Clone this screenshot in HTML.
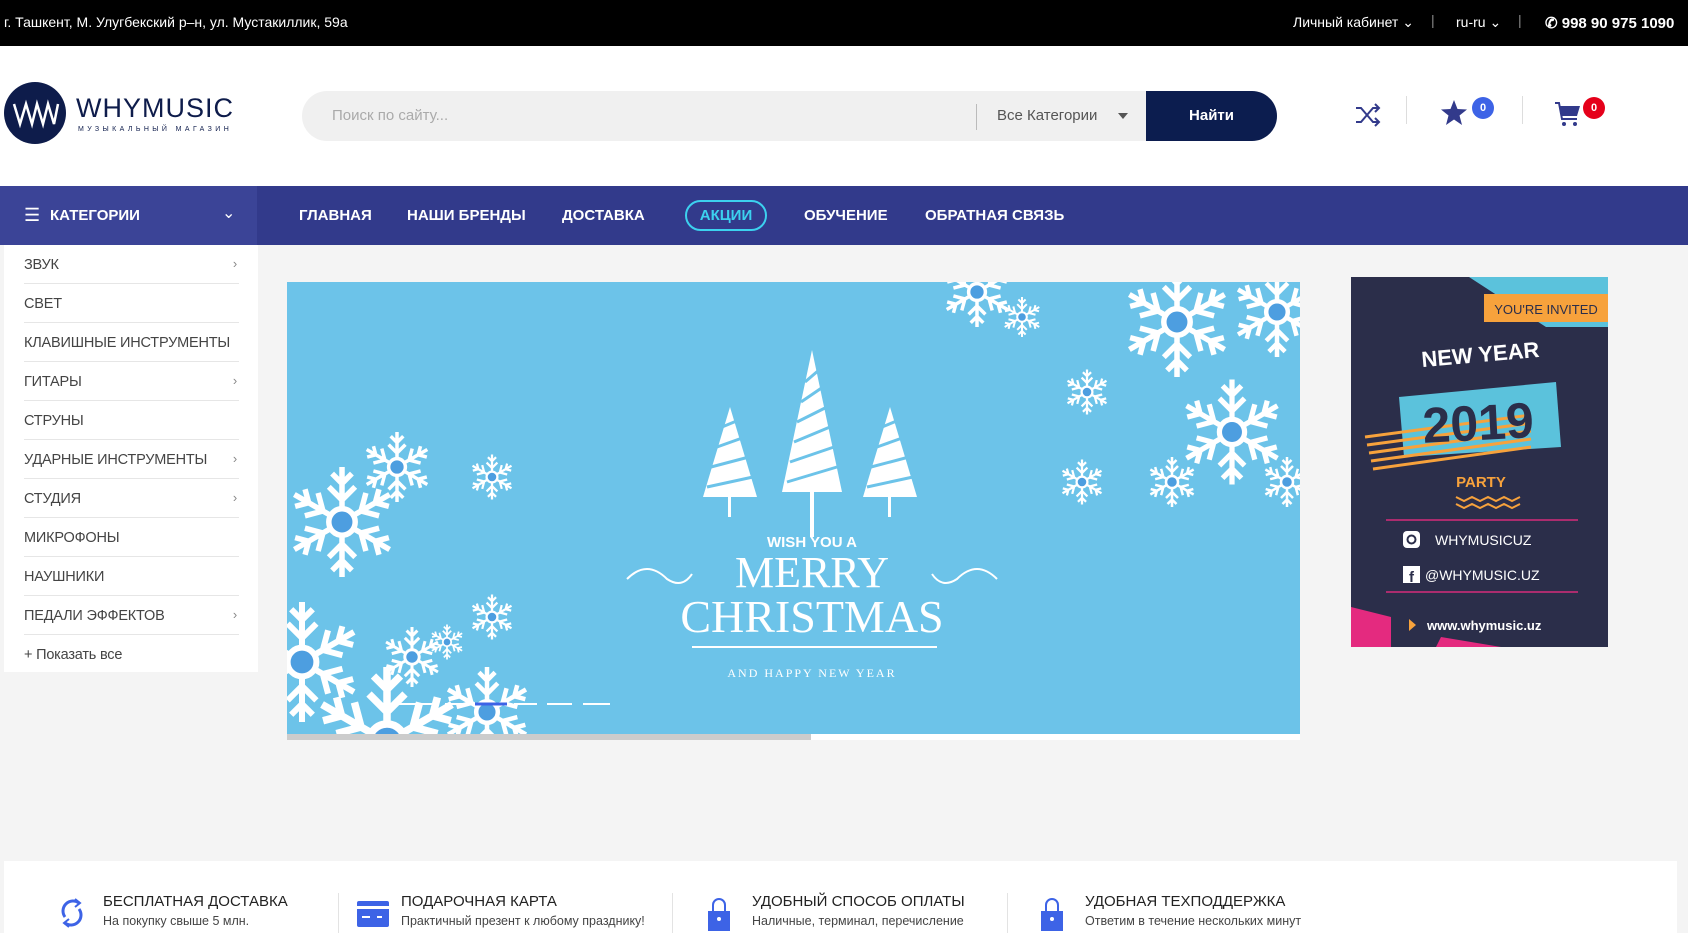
<!DOCTYPE html>
<html><head><meta charset="utf-8">
<style>
*{margin:0;padding:0;box-sizing:border-box}
body{width:1688px;height:933px;overflow:hidden;background:#f4f4f4;font-family:"Liberation Sans",sans-serif;position:relative}
.abs{position:absolute}
.top{left:0;top:0;width:1688px;height:46px;background:#000;color:#fff;font-size:14px}
.top span{position:absolute;top:14px}
.hdr{left:0;top:46px;width:1688px;height:140px;background:#fff}
.nav{left:0;top:186px;width:1688px;height:59px;background:#323a8b}
.nav .cat{position:absolute;left:0;top:0;width:257px;height:59px;background:#3b4497;color:#fff;font-weight:bold;font-size:16px}
.nav a{position:absolute;top:21px;color:#fff;font-weight:bold;font-size:15px;text-decoration:none;white-space:nowrap}
.side{left:4px;top:245px;width:254px;height:427px;background:#fff}
.side div{position:absolute;left:20px;width:215px;height:39px;border-bottom:1px solid #e6e6e6;font-size:14.5px;color:#444;padding-top:12px;white-space:nowrap;letter-spacing:-.2px}
.side div i{position:absolute;right:2px;top:11px;font-style:normal;color:#888;font-size:13px}
.feat{left:4px;top:861px;width:1673px;height:72px;background:#fff}
.f{position:absolute;top:32px}
.f b{display:block;font-weight:normal;font-size:15px;color:#222}
.f s{display:block;text-decoration:none;font-size:12.5px;color:#444;margin-top:4px}
.vs{position:absolute;top:32px;width:1px;height:40px;background:#e3e3e3}
</style></head><body>
<div class="abs top">
<span style="left:4px">г. Ташкент, М. Улугбекский р–н, ул. Мустакиллик, 59а</span>
<span style="left:1293px">Личный кабинет ⌄</span>
<span style="left:1431px;top:12px;color:#888">|</span>
<span style="left:1456px">ru-ru ⌄</span>
<span style="left:1518px;top:12px;color:#888">|</span>
<span style="left:1545px;font-weight:bold;font-size:15px">✆ 998 90 975 1090</span>
</div>
<div class="abs hdr">
<svg class="abs" style="left:4px;top:36px" width="62" height="62"><circle cx="31" cy="31" r="31" fill="#0e1c4b"/><path d="M10 22 L16 42 L22 22 L28 42 L33 22 L39 42 L44 22 L50 42 L54 22" stroke="#fff" stroke-width="2.5" fill="none"/></svg>
<div class="abs" style="left:76px;top:47px;font-size:27px;color:#0e1c4b;letter-spacing:1px">WHYMUSIC</div>
<div class="abs" style="left:78px;top:80px;font-size:7px;color:#0e1c4b;letter-spacing:3.4px">МУЗЫКАЛЬНЫЙ МАГАЗИН</div>
<div class="abs" style="left:302px;top:45px;width:975px;height:50px;background:#f0f0f0;border-radius:25px"></div>
<div class="abs" style="left:332px;top:61px;font-size:15px;color:#aaa">Поиск по сайту...</div>
<div class="abs" style="left:976px;top:58px;width:1px;height:26px;background:#bbb"></div>
<div class="abs" style="left:997px;top:61px;font-size:15px;color:#555">Все Категории</div>
<div class="abs" style="left:1118px;top:67px;width:0;height:0;border:5px solid transparent;border-top:6px solid #555"></div>
<div class="abs" style="left:1146px;top:45px;width:131px;height:50px;background:#0c1d4f;border-radius:0 25px 25px 0;color:#fff;font-weight:bold;font-size:15px;text-align:center;line-height:50px">Найти</div>
<svg class="abs" style="left:1354px;top:55px" width="28" height="28" fill="none" stroke="#323a8b" stroke-width="2"><path d="M2 7 H7 L19 21 H25 M2 21 H7 L19 7 H25 M21 3 L25 7 L21 11 M21 17 L25 21 L21 25"/></svg>
<div class="abs" style="left:1406px;top:50px;width:1px;height:28px;background:#ddd"></div>
<svg class="abs" style="left:1440px;top:53px" width="28" height="28"><path d="M14 1 L17.5 10 L27 10.5 L19.5 16.5 L22 26 L14 20.5 L6 26 L8.5 16.5 L1 10.5 L10.5 10 Z" fill="#323a8b"/></svg>
<div class="abs" style="left:1472px;top:51px;width:22px;height:22px;border-radius:11px;background:#3d63e6;color:#fff;font-size:11px;font-weight:bold;text-align:center;line-height:22px">0</div>
<div class="abs" style="left:1522px;top:50px;width:1px;height:28px;background:#ddd"></div>
<svg class="abs" style="left:1554px;top:54px" width="28" height="28"><path d="M1 3 H5 L8 19 H23" stroke="#323a8b" stroke-width="2" fill="none"/><path d="M6 6 H26 L23 16 H8 Z" fill="#323a8b"/><circle cx="10" cy="24" r="2" fill="#323a8b"/><circle cx="21" cy="24" r="2" fill="#323a8b"/></svg>
<div class="abs" style="left:1583px;top:51px;width:22px;height:22px;border-radius:11px;background:#e5001a;color:#fff;font-size:11px;font-weight:bold;text-align:center;line-height:22px">0</div>
</div>
<div class="abs nav">
<div class="cat"><span style="position:absolute;left:24px;top:19px;font-size:18px;font-weight:normal">☰</span><span style="position:absolute;left:50px;top:21px;font-size:15px">КАТЕГОРИИ</span><span style="position:absolute;left:222px;top:17px;font-weight:normal">⌄</span></div>
<a style="left:299px">ГЛАВНАЯ</a><a style="left:407px">НАШИ БРЕНДЫ</a><a style="left:562px">ДОСТАВКА</a>
<a style="left:685px;top:14px;width:82px;height:31px;border:2px solid #3cd1ef;border-radius:16px;color:#3cd1ef;text-align:center;line-height:27px">АКЦИИ</a>
<a style="left:804px">ОБУЧЕНИЕ</a><a style="left:925px">ОБРАТНАЯ СВЯЗЬ</a>
</div>
<div class="abs side">
<div style="top:0">ЗВУК<i>›</i></div><div style="top:39px">СВЕТ</div><div style="top:78px">КЛАВИШНЫЕ ИНСТРУМЕНТЫ</div><div style="top:117px">ГИТАРЫ<i>›</i></div><div style="top:156px">СТРУНЫ</div><div style="top:195px">УДАРНЫЕ ИНСТРУМЕНТЫ<i>›</i></div><div style="top:234px">СТУДИЯ<i>›</i></div><div style="top:273px">МИКРОФОНЫ</div><div style="top:312px">НАУШНИКИ</div><div style="top:351px">ПЕДАЛИ ЭФФЕКТОВ<i>›</i></div><div style="top:390px;border:none">+ Показать все</div>
</div>
<svg class="abs" style="left:287px;top:282px" width="1013" height="452">
<defs><g id="sf" stroke="#fff" stroke-width="5" fill="none"><g id="arm"><path d="M0 0 V-50 M0 -20 L-12 -32 M0 -20 L12 -32 M0 -35 L-9 -44 M0 -35 L9 -44"/></g><use href="#arm" transform="rotate(60)"/><use href="#arm" transform="rotate(120)"/><use href="#arm" transform="rotate(180)"/><use href="#arm" transform="rotate(240)"/><use href="#arm" transform="rotate(300)"/><circle r="12" fill="#4d9ee0"/></g></defs>
<rect width="1013" height="452" fill="#6cc3e9"/>
<use href="#sf" transform="translate(55,240) scale(1.1)"/><use href="#sf" transform="translate(100,460) scale(1.5)"/><use href="#sf" transform="translate(15,380) scale(1.2)"/><use href="#sf" transform="translate(125,375) scale(.6)"/><use href="#sf" transform="translate(200,430) scale(.9)"/><use href="#sf" transform="translate(110,185) scale(.7)"/><use href="#sf" transform="translate(205,195) scale(.45)"/><use href="#sf" transform="translate(205,335) scale(.45)"/><use href="#sf" transform="translate(160,360) scale(.35)"/>
<use href="#sf" transform="translate(945,150) scale(1.05)"/><use href="#sf" transform="translate(890,40) scale(1.1)"/><use href="#sf" transform="translate(990,30) scale(.9)"/><use href="#sf" transform="translate(800,110) scale(.45)"/><use href="#sf" transform="translate(795,200) scale(.45)"/><use href="#sf" transform="translate(735,35) scale(.4)"/><use href="#sf" transform="translate(690,10) scale(.7)"/><use href="#sf" transform="translate(885,200) scale(.5)"/><use href="#sf" transform="translate(1000,200) scale(.5)"/>
<g fill="#fff"><path d="M525 68 L555 210 L495 210 Z"/><rect x="523" y="205" width="4" height="50"/><path d="M443 125 L470 215 L416 215 Z"/><rect x="441" y="210" width="3" height="25"/><path d="M603 125 L630 215 L576 215 Z"/><rect x="601" y="210" width="3" height="25"/></g>
<g stroke="#6cc3e9" stroke-width="3"><path d="M500 200 L550 185 M503 180 L547 165 M507 160 L543 145 M510 140 L540 125 M514 120 L536 105 M518 100 L532 88 M420 205 L466 195 M424 185 L462 175 M430 165 L458 155 M435 145 L452 138 M580 205 L626 195 M584 185 L622 175 M590 165 L618 155 M595 145 L612 138"/></g>
<text x="525" y="265" fill="#fff" font-family="Liberation Sans" font-weight="bold" font-size="15" text-anchor="middle">WISH YOU A</text>
<text x="525" y="305" fill="#fff" font-family="Liberation Serif" font-size="44" text-anchor="middle">MERRY</text>
<text x="525" y="350" fill="#fff" font-family="Liberation Serif" font-size="46" text-anchor="middle">CHRISTMAS</text>
<path d="M340 297 q20 -20 40 0 q15 10 25 -5 M710 297 q-20 -20 -40 0 q-15 10 -25 -5 M405 365 H650" stroke="#fff" stroke-width="2" fill="none"/>
<text x="525" y="395" fill="#fff" font-family="Liberation Serif" font-size="12" letter-spacing="2" text-anchor="middle">AND HAPPY NEW YEAR</text>
<g stroke-width="2"><path d="M105 422H150M158 422H185M227 422H250M260 422H285M296 422H323" stroke="#fff"/><path d="M188 422H220" stroke="#3d63e6" stroke-width="3"/></g>
</svg>
<div class="abs" style="left:287px;top:734px;width:1013px;height:6px;background:#fff"></div>
<div class="abs" style="left:287px;top:734px;width:524px;height:6px;background:#ccc"></div>
<svg class="abs" style="left:1351px;top:277px" width="257" height="370">
<rect width="257" height="370" fill="#2b2e4a"/>
<path d="M118 0 H257 V50 H195 Z" fill="#5bc2dc"/>
<rect x="133" y="17" width="124" height="28" fill="#f7a23c"/>
<text x="195" y="37" font-family="Liberation Sans" font-size="13" fill="#2b2e4a" text-anchor="middle">YOU'RE INVITED</text>
<text x="130" y="85" font-family="Liberation Sans" font-weight="bold" font-size="22" fill="#fff" text-anchor="middle" transform="rotate(-5 130 85)">NEW YEAR</text>
<path d="M48 120 L205 105 L210 170 L53 180 Z" fill="#5bc2dc"/>
<g stroke="#f7a23c" stroke-width="3"><path d="M14 160 L180 138 M16 168 L180 146 M18 176 L180 154 M20 184 L180 162 M22 192 L180 170"/></g>
<text x="128" y="163" font-family="Liberation Sans" font-weight="bold" font-size="50" fill="#2b2e4a" text-anchor="middle" transform="rotate(-3 128 163)">2019</text>
<text x="130" y="210" font-family="Liberation Sans" font-weight="bold" font-size="15" fill="#f7a23c" text-anchor="middle">PARTY</text>
<path d="M105 220 l8 4 l8 -4 l8 4 l8 -4 l8 4 l8 -4 l8 4 l8 -4 M105 227 l8 4 l8 -4 l8 4 l8 -4 l8 4 l8 -4 l8 4 l8 -4" stroke="#f7a23c" stroke-width="2" fill="none"/>
<path d="M35 243 H227 M35 315 H227" stroke="#d62b7a" stroke-width="1.5"/>
<rect x="52" y="254" width="17" height="17" rx="4" fill="#fff"/><circle cx="60.5" cy="262.5" r="4" fill="none" stroke="#2b2e4a" stroke-width="2"/>
<text x="84" y="268" font-family="Liberation Sans" font-size="14" fill="#fff">WHYMUSICUZ</text>
<rect x="52" y="289" width="17" height="17" fill="#fff"/><text x="58" y="305" font-family="Liberation Sans" font-weight="bold" font-size="15" fill="#2b2e4a">f</text>
<text x="74" y="303" font-family="Liberation Sans" font-size="14" fill="#fff">@WHYMUSIC.UZ</text>
<path d="M0 330 L40 340 L40 370 L0 370 Z M90 360 L150 370 L85 370 Z" fill="#e42a7f"/>
<path d="M58 342 L65 348 L58 354 Z" fill="#f7a23c"/>
<text x="76" y="353" font-family="Liberation Sans" font-weight="bold" font-size="13" fill="#fff">www.whymusic.uz</text>
</svg>
<div class="abs feat">
<svg class="abs" style="left:55px;top:36px" width="26" height="32" fill="none" stroke="#3d63e6" stroke-width="3"><path d="M6 20 A10 10 0 0 1 20 6 M20 12 A10 10 0 0 1 6 26"/><path d="M16 2 L21 6 L16 10 M10 22 L5 26 L10 30" stroke-width="2"/></svg>
<div class="f" style="left:99px"><b>БЕСПЛАТНАЯ ДОСТАВКА</b><s>На покупку свыше 5 млн.</s></div>
<div class="vs" style="left:334px"></div>
<svg class="abs" style="left:353px;top:40px" width="32" height="26"><rect width="32" height="26" rx="2" fill="#3d63e6"/><rect y="5" width="32" height="3" fill="#fff"/><rect x="5" y="15" width="8" height="2" fill="#fff"/><rect x="20" y="15" width="5" height="2" fill="#fff"/></svg>
<div class="f" style="left:397px"><b>ПОДАРОЧНАЯ КАРТА</b><s>Практичный презент к любому празднику!</s></div>
<div class="vs" style="left:668px"></div>
<svg class="abs" style="left:704px;top:36px" width="22" height="34"><path d="M5 14 V8 A6 6 0 0 1 17 8 V14" stroke="#3d63e6" stroke-width="2" fill="none"/><rect y="14" width="22" height="20" fill="#3d63e6"/><circle cx="11" cy="22" r="2" fill="#fff"/></svg>
<div class="f" style="left:748px"><b>УДОБНЫЙ СПОСОБ ОПЛАТЫ</b><s>Наличные, терминал, перечисление</s></div>
<div class="vs" style="left:1003px"></div>
<svg class="abs" style="left:1037px;top:36px" width="22" height="34"><path d="M5 14 V8 A6 6 0 0 1 17 8 V14" stroke="#3d63e6" stroke-width="2" fill="none"/><rect y="14" width="22" height="20" fill="#3d63e6"/><circle cx="11" cy="22" r="2" fill="#fff"/></svg>
<div class="f" style="left:1081px"><b>УДОБНАЯ ТЕХПОДДЕРЖКА</b><s>Ответим в течение нескольких минут</s></div>
</div>
</body></html>
